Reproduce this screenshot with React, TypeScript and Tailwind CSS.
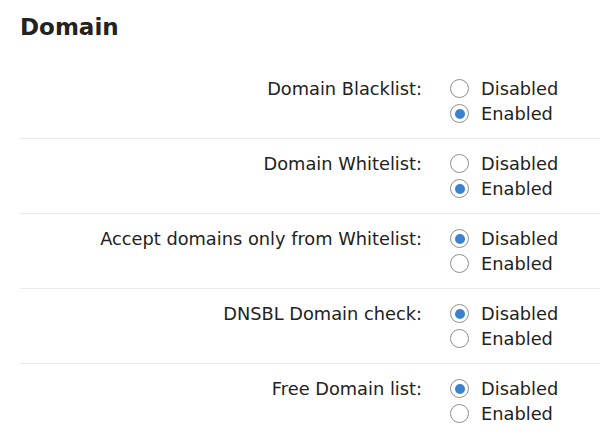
import { useState } from "react";

type Opt = "disabled" | "enabled";

const initial: { label: string; value: Opt }[] = [
  { label: "Domain Blacklist:", value: "enabled" },
  { label: "Domain Whitelist:", value: "enabled" },
  { label: "Accept domains only from Whitelist:", value: "disabled" },
  { label: "DNSBL Domain check:", value: "disabled" },
  { label: "Free Domain list:", value: "disabled" },
];

function Radio({ checked, onClick }: { checked: boolean; onClick: () => void }) {
  return (
    <span
      onClick={onClick}
      className="flex h-[19px] w-[19px] shrink-0 items-center justify-center rounded-full border border-[#8f8f8f] bg-white"
    >
      {checked && <span className="h-[10px] w-[10px] rounded-full bg-[#3a82cf]" />}
    </span>
  );
}

export default function App() {
  const [rows, setRows] = useState(initial);

  const setValue = (i: number, value: Opt) =>
    setRows(rows.map((r, j) => (j === i ? { ...r, value } : r)));

  return (
    <div className="h-[440px] w-[600px] overflow-hidden bg-white font-['DejaVu_Sans',Verdana,sans-serif] text-[#222]">
      <h2 className="px-5 pt-[12px] text-[23px] font-bold leading-[30px] text-[#222]">Domain</h2>
      <div className="mt-[22px] pl-5">
        {rows.map((row, i) => (
          <div
            key={row.label}
            className={`flex py-[12px] ${i > 0 ? "border-t border-[#ebebeb]" : ""}`}
          >
            <div className="flex-1 pr-[26px] text-right text-[17.8px] leading-[25px]">{row.label}</div>
            <div className="w-[152px] text-[17.8px] leading-[25px]">
              {(["disabled", "enabled"] as Opt[]).map((v) => (
                <label key={v} className="flex items-center gap-[12px] pl-[2px]">
                  <Radio checked={row.value === v} onClick={() => setValue(i, v)} />
                  <span>{v === "disabled" ? "Disabled" : "Enabled"}</span>
                </label>
              ))}
            </div>
          </div>
        ))}
      </div>
    </div>
  );
}
